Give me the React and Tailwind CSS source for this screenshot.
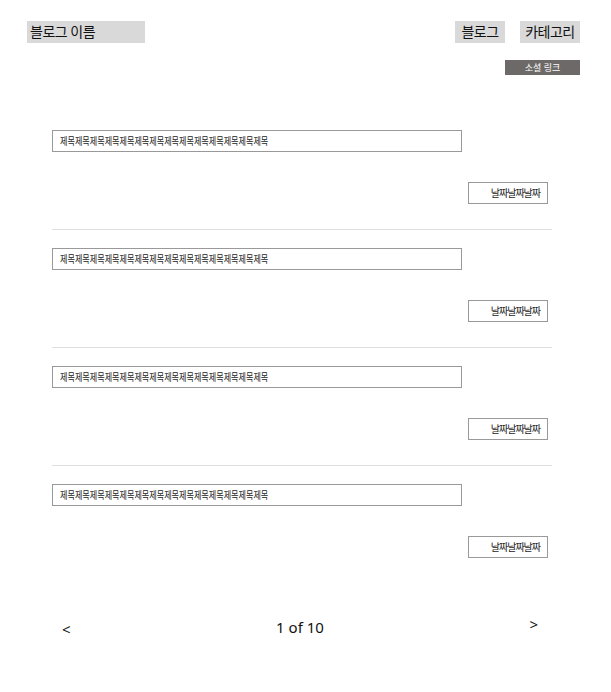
import React from 'react';

const posts = [1, 2, 3, 4];

const App = () => {
  return (
    <div className="min-h-screen bg-white text-[#111] font-['Noto_Sans','Noto_Sans_CJK_KR',sans-serif]">
      {/* 상단 헤더 */}
      <header className="pt-[21px] pl-[27px] pr-[31px]">
        <div className="flex items-start justify-between">
          <div className="w-[118px] h-[22px] bg-[#d9d9d9] pl-[3px] text-[14px] leading-[22px] tracking-[-0.5px]">
            블로그 이름
          </div>
          <nav className="flex gap-[15px]">
            <a className="w-[50px] h-[22px] bg-[#d9d9d9] text-center text-[14px] leading-[22px] tracking-[-0.5px]">
              블로그
            </a>
            <a className="w-[60px] h-[22px] bg-[#d9d9d9] text-center text-[14px] leading-[22px] tracking-[-0.5px]">
              카테고리
            </a>
          </nav>
        </div>
        <div className="flex justify-end mt-[17px]">
          <a className="w-[75px] h-[15px] bg-[#6d6968] text-center text-white text-[9px] leading-[15px]">
            소셜 링크
          </a>
        </div>
      </header>

      {/* 글 목록 */}
      <main className="mt-[55px] ml-[52px] w-[500px]">
        {posts.map((id) => (
          <article
            key={id}
            className="pt-[18px] first:pt-0 pb-[25px] border-b border-[#dedede] last:border-b-0"
          >
            <div className="w-[410px] h-[22px] border border-[#999] pl-[7px] text-[10.5px] leading-[20px] text-[#222] overflow-hidden">
              <span className="inline-block origin-left scale-x-[0.77] whitespace-nowrap">
                제목제목제목제목제목제목제목제목제목제목제목제목제목제목
              </span>
            </div>
            <div className="flex justify-end mt-[30px] pr-[4px]">
              <div className="w-[80px] h-[22px] border border-[#999] pr-[7px] text-right text-[10px] leading-[20px] tracking-[-1px] text-[#222]">
                날짜날짜날짜
              </div>
            </div>
          </article>
        ))}
      </main>

      {/* 페이지 이동 */}
      <div className="flex items-start justify-between pl-[62px] pr-[73px] pt-[34px]">
        <button className="mt-[2px] text-[15px] leading-[20px]">&lt;</button>
        <span className="text-[15px] leading-[20px]">1 of 10</span>
        <button className="-mt-[3px] text-[15px] leading-[20px]">&gt;</button>
      </div>
    </div>
  );
};

export default App;
